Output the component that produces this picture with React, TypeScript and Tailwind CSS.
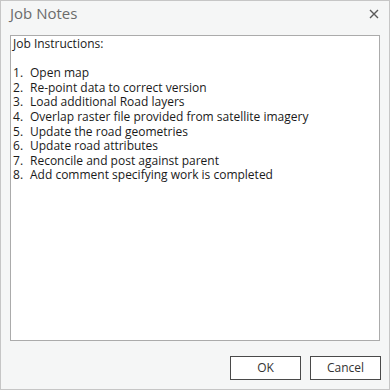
import React from 'react';

const steps = [
  'Open map',
  'Re-point data to correct version',
  'Load additional Road layers',
  'Overlap raster file provided from satellite imagery',
  'Update the road geometries',
  'Update road attributes',
  'Reconcile and post against parent',
  'Add comment specifying work is completed',
];

const App: React.FC = () => {
  return (
    <div
      className="w-[390px] h-[390px] bg-[#f5f6f6] border border-[#c6c6c6] flex flex-col"
      style={{ fontFamily: '"Segoe UI", "Open Sans", "Noto Sans", sans-serif' }}
    >
      <div className="h-[34px] flex items-center justify-between pl-[9px] pr-[10px]">
        <span className="text-[15px] text-[#6b6b6b] leading-none -mt-[10px]">Job Notes</span>
        <svg className="w-[10px] h-[10px] -mt-[8px]" viewBox="0 0 10 10" fill="none" stroke="#5a5a5a" strokeWidth="1.4">
          <path d="M1 1L9 9M9 1L1 9" />
        </svg>
      </div>
      <div className="mx-[9px] h-[306px] border border-[#ababab] bg-white px-[2px] pt-[1px] text-[12px] leading-[14.6px] text-[#1a1a1a]">
        <div>Job Instructions:</div>
        <div className="h-[14.6px]" />
        {steps.map((s, i) => (
          <div key={i} className="flex">
            <span className="w-[17px] shrink-0">{i + 1}.</span>
            <span>{s}</span>
          </div>
        ))}
      </div>
      <div className="flex justify-end gap-[9px] pr-[8px] mt-[15px]">
        <button className="w-[71px] h-[24px] border border-[#4a4a4a] bg-white text-[12px] text-[#333]">OK</button>
        <button className="w-[71px] h-[24px] border border-[#4a4a4a] bg-white text-[12px] text-[#333]">Cancel</button>
      </div>
    </div>
  );
};

export default App;
